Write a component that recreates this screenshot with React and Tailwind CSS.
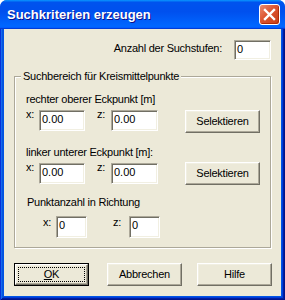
import React from "react";

const Edit = ({ w, h, v, extra = "" }) => (
  <div
    className={`${w} ${h} ${extra} shrink-0 bg-white border border-t-[#ACA899] border-l-[#ACA899] border-b-white border-r-white shadow-[inset_1px_1px_#716F64,inset_-1px_-1px_#F1EFE2] pl-[2px] pt-[2px] leading-[13px] text-[11px] tracking-normal`}
  >
    {v}
  </div>
);

const Btn = ({ children, extra = "" }) => (
  <div
    className={`${extra} shrink-0 w-[75px] h-[23px] flex items-center justify-center bg-[#ECE9D8] border border-t-white border-l-white border-b-[#716F64] border-r-[#716F64] shadow-[inset_-1px_-1px_#ACA899,inset_1px_1px_#F1EFE2] text-[11px] leading-[13px]`}
  >
    {children}
  </div>
);

export default function App() {
  return (
    <div className="w-[285px] h-[300px] flex flex-col font-['Liberation_Sans',Arial,sans-serif] text-black bg-[#0054E3] rounded-t-[7px] overflow-hidden">
      {/* Title bar */}
      <div className="h-[29px] shrink-0 flex items-center justify-between pl-[7px] pr-[5px] bg-[linear-gradient(180deg,#0997ff,#0053ee_8%,#0050ee_40%,#06f_88%,#06f_93%,#005bff_95%,#003dd7_96%,#003dd7)]">
        <span className="text-white font-bold text-[13px] leading-[16px] [text-shadow:1px_1px_#0f1089] mt-[1px]">
          Suchkriterien erzeugen
        </span>
        <div className="w-[21px] h-[21px] rounded-[3px] border border-white bg-[linear-gradient(135deg,#EC8C70,#DC5430_45%,#C63D16)] shadow-[inset_-1px_-1px_#B02B08] flex items-center justify-center">
          <svg width="13" height="13" viewBox="0 0 13 13">
            <path d="M2 2 L11 11 M11 2 L2 11" stroke="white" strokeWidth="2.4" strokeLinecap="square" />
          </svg>
        </div>
      </div>

      {/* Frame + client */}
      <div className="flex-1 flex flex-col px-[4px] pb-[4px] bg-[#0055E5] shadow-[inset_1px_0_#0831d9,inset_-1px_-1px_#00138c,inset_2px_0_#166aee,inset_-2px_-2px_#001ea0,inset_3px_0_#0855dd,inset_-3px_-3px_#003bda]">
        <div className="flex-1 flex flex-col bg-[#ECE9D8] pl-[10px] text-[11px] leading-[13px] tracking-[-0.25px]">
          {/* Anzahl row */}
          <div className="mt-[11px] pr-[10px] flex justify-end gap-[12px]">
            <span className="mt-[2px]">Anzahl der Suchstufen:</span>
            <Edit w="w-[37px]" h="h-[20px]" v="0" />
          </div>

          {/* Group box */}
          <div className="relative mt-[16px] w-[257px] h-[172px] shrink-0 border border-[#ACA899] shadow-[inset_1px_1px_white,1px_1px_white] pl-[11px] pt-[16px] flex flex-col">
            <span className="absolute left-[6px] top-[-7px] px-[2px] bg-[#ECE9D8] leading-[13px]">
              Suchbereich für Kreismittelpunkte
            </span>

            <div className="h-[13px]">rechter oberer Eckpunkt [m]</div>
            <div className="mt-[4px] flex items-start h-[23px]">
              <span className="w-[13px] -mt-[2px]">x:</span>
              <Edit w="w-[46px]" h="h-[21px]" v="0.00" />
              <span className="w-[14px] ml-[12px] -mt-[2px]">z:</span>
              <Edit w="w-[47px]" h="h-[21px]" v="0.00" />
              <Btn extra="ml-[27px]">Selektieren</Btn>
            </div>

            <div className="mt-[13px] h-[13px]">linker unterer Eckpunkt [m]:</div>
            <div className="mt-[3px] flex items-start h-[23px]">
              <span className="w-[13px] -mt-[1px]">x:</span>
              <Edit w="w-[46px]" h="h-[21px]" v="0.00" extra="mt-[1px]" />
              <span className="w-[14px] ml-[12px] -mt-[1px]">z:</span>
              <Edit w="w-[47px]" h="h-[21px]" v="0.00" extra="mt-[1px]" />
              <Btn extra="ml-[27px]">Selektieren</Btn>
            </div>

            <div className="mt-[11px] h-[13px] pl-[1px]">Punktanzahl in Richtung</div>
            <div className="mt-[7px] flex items-start">
              <span className="ml-[17px] w-[13px]">x:</span>
              <Edit w="w-[31px]" h="h-[22px]" v="0" />
              <span className="ml-[26px] w-[16px]">z:</span>
              <Edit w="w-[31px]" h="h-[22px]" v="0" />
            </div>
          </div>

          {/* Buttons */}
          <div className="mt-[15px] flex items-start">
            <div className="shrink-0 w-[75px] h-[23px] border border-black">
              <div className="w-full h-full flex items-center justify-center bg-[#ECE9D8] border border-t-white border-l-white border-b-[#716F64] border-r-[#716F64] shadow-[inset_-1px_-1px_#ACA899,inset_1px_1px_#F1EFE2] p-[2px]">
                <div className="w-full h-full border border-dotted border-black flex items-center justify-center">
                  <span><span className="underline underline-offset-[1px]">O</span>K</span>
                </div>
              </div>
            </div>
            <Btn extra="ml-[18px]">Abbrechen</Btn>
            <Btn extra="ml-[15px]">Hilfe</Btn>
          </div>
        </div>
      </div>
    </div>
  );
}
